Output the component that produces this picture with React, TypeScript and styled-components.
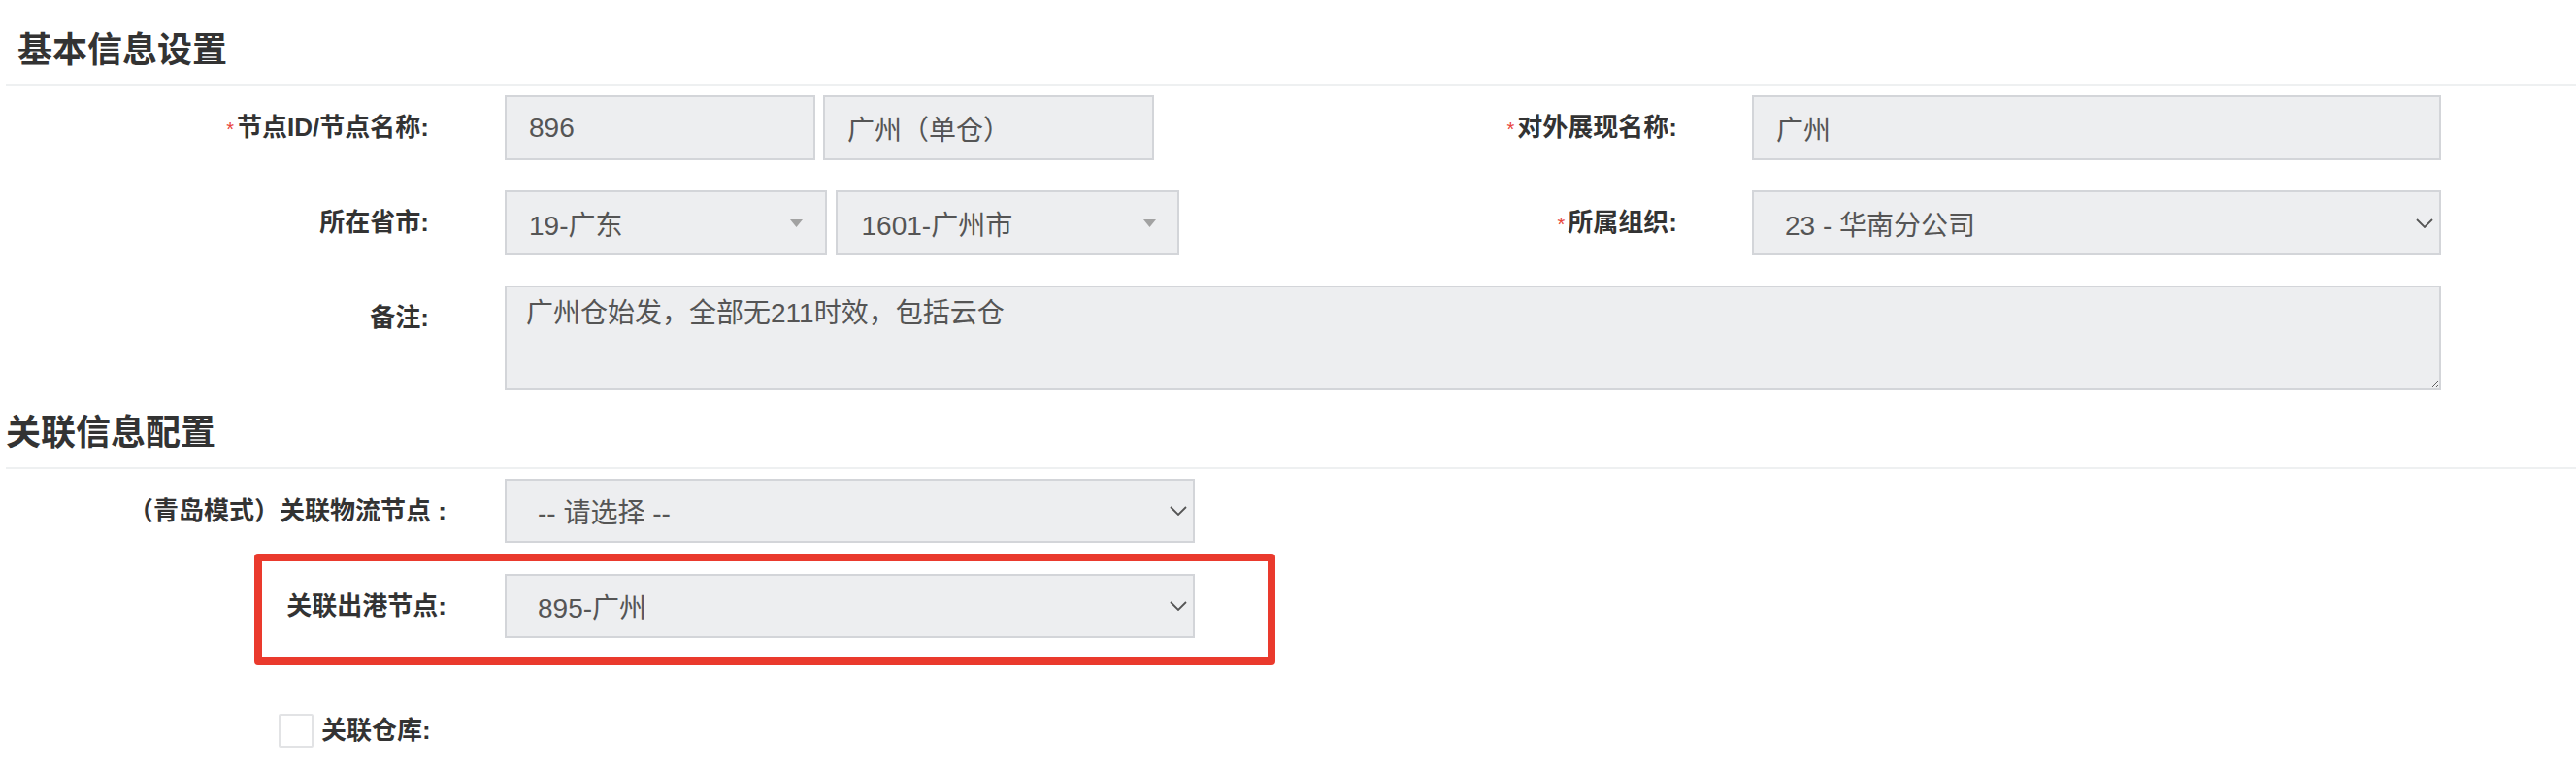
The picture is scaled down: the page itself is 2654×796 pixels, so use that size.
import React from "react";
import styled, { createGlobalStyle } from "styled-components";

const GlobalStyle = createGlobalStyle`
  html, body {
    margin: 0;
    padding: 0;
    background: #ffffff;
  }
  body {
    font-family: "Liberation Sans", "Noto Sans CJK SC", sans-serif;
    color: #333333;
  }
  * { box-sizing: border-box; }
`;

const Page = styled.div`
  width: 2654px;
  padding-bottom: 20px;
`;

const SectionHeader = styled.h2<{ $indent: number; $top: number }>`
  margin: 0 0 0 6px;
  padding: ${(p) => p.$top}px 0 14px ${(p) => p.$indent}px;
  border-bottom: 2px solid #eef0f1;
  font-family: "Noto Sans CJK SC", sans-serif;
  font-size: 36px;
  line-height: 50px;
  font-weight: 600;
  color: #333333;
`;

const BasicGrid = styled.div`
  margin-top: 9px;
  display: grid;
  grid-template-columns: 520px 695px 590px 710px;
  grid-template-rows: 67px 67px 108px;
  row-gap: 31px;
`;

const FieldLabel = styled.label<{ $pad: number }>`
  display: block;
  padding-right: ${(p) => p.$pad}px;
  text-align: right;
  font-size: 26px;
  line-height: 67px;
  font-weight: 700;
  color: #333333;
  white-space: nowrap;
`;

const Required = styled.span`
  color: #e8453c;
  font-size: 20px;
  font-weight: 400;
  margin-right: 3px;
`;

const FieldGroup = styled.div<{ $gap: number }>`
  display: flex;
  gap: ${(p) => p.$gap}px;
  align-items: stretch;
`;

const TextInput = styled.input<{ $w?: number }>`
  width: ${(p) => (p.$w ? `${p.$w}px` : "100%")};
  height: 67px;
  margin: 0;
  padding: 0 0 0 23px;
  border: 2px solid #d3d5d9;
  border-radius: 0;
  background: #edeef0;
  font-family: "Liberation Sans", "Noto Sans CJK SC", sans-serif;
  font-size: 28px;
  color: #555555;
  outline: none;
`;

const SelectBox = styled.div<{ $w?: number; $h: number; $pl: number; $pr: number }>`
  display: flex;
  align-items: center;
  width: ${(p) => (p.$w ? `${p.$w}px` : "100%")};
  height: ${(p) => p.$h}px;
  padding: 0 ${(p) => p.$pr}px 0 ${(p) => p.$pl}px;
  border: 2px solid #d3d5d9;
  background: #edeef0;
  font-size: 28px;
  color: #555555;
  white-space: nowrap;
`;

const SelectValue = styled.span`
  flex: 1;
`;

const NoteArea = styled.textarea`
  grid-column: 2 / 5;
  width: 100%;
  height: 108px;
  margin: 0;
  padding: 9px 20px 4px;
  border: 2px solid #d3d5d9;
  border-radius: 0;
  background: #edeef0;
  font-family: "Liberation Sans", "Noto Sans CJK SC", sans-serif;
  font-size: 28px;
  line-height: 36px;
  color: #555555;
  outline: none;
`;

const LinkRows = styled.div`
  margin-top: 10px;
  display: flex;
  flex-direction: column;
  align-items: flex-start;
`;

const LinkRow = styled.div<{ $labelW: number }>`
  display: grid;
  grid-template-columns: ${(p) => p.$labelW}px 711px;
  column-gap: 60px;
  align-items: center;
`;

const LinkLabel = styled.label`
  display: block;
  text-align: right;
  font-size: 26px;
  line-height: 66px;
  font-weight: 700;
  color: #333333;
  white-space: nowrap;
`;

const HighlightFrame = styled.div`
  margin: 11px 0 0 262px;
  width: 1052px;
  padding: 13px 75px 20px 0;
  border: 8px solid #ea3a2d;
  border-radius: 4px;
`;

const CheckRow = styled.div`
  margin-top: 50px;
  padding-left: 287px;
  display: flex;
  align-items: center;
  gap: 8px;
`;

const CheckBox = styled.span`
  display: block;
  width: 36px;
  height: 35px;
  border: 2px solid #e2e3e5;
  border-radius: 2px;
  background: #ffffff;
`;

const CheckLabel = styled.span`
  font-size: 26px;
  font-weight: 700;
  color: #333333;
  line-height: 35px;
`;

const Triangle = () => (
  <svg width="13" height="8" viewBox="0 0 13 8">
    <polygon points="0,0 13,0 6.5,8" fill="#a2a2a2" />
  </svg>
);

const Chevron = () => (
  <svg width="18" height="10" viewBox="0 0 18 10">
    <polyline
      points="1,1 9,9 17,1"
      fill="none"
      stroke="#555555"
      strokeWidth="1.8"
    />
  </svg>
);

export default function App() {
  return (
    <Page>
      <GlobalStyle />
      <SectionHeader $indent={12} $top={23}>
        基本信息设置
      </SectionHeader>
      <BasicGrid>
        <FieldLabel $pad={78}>
          <Required>*</Required>节点ID/节点名称:
        </FieldLabel>
        <FieldGroup $gap={8}>
          <TextInput $w={320} readOnly value="896" />
          <TextInput $w={341} readOnly value="广州（单仓）" />
        </FieldGroup>
        <FieldLabel $pad={77}>
          <Required>*</Required>对外展现名称:
        </FieldLabel>
        <TextInput readOnly value="广州" />

        <FieldLabel $pad={78}>所在省市:</FieldLabel>
        <FieldGroup $gap={9}>
          <SelectBox $w={332} $h={67} $pl={23} $pr={23}>
            <SelectValue>19-广东</SelectValue>
            <Triangle />
          </SelectBox>
          <SelectBox $w={355} $h={67} $pl={25} $pr={22}>
            <SelectValue>1601-广州市</SelectValue>
            <Triangle />
          </SelectBox>
        </FieldGroup>
        <FieldLabel $pad={77}>
          <Required>*</Required>所属组织:
        </FieldLabel>
        <SelectBox $h={67} $pl={32} $pr={6}>
          <SelectValue>23 - 华南分公司</SelectValue>
          <Chevron />
        </SelectBox>

        <FieldLabel $pad={78}>备注:</FieldLabel>
        <NoteArea readOnly value="广州仓始发，全部无211时效，包括云仓" />
      </BasicGrid>

      <SectionHeader $indent={0} $top={15}>
        关联信息配置
      </SectionHeader>
      <LinkRows>
        <LinkRow $labelW={460}>
          <LinkLabel>（青岛模式）关联物流节点 :</LinkLabel>
          <SelectBox $h={66} $pl={32} $pr={6}>
            <SelectValue>-- 请选择 --</SelectValue>
            <Chevron />
          </SelectBox>
        </LinkRow>
        <HighlightFrame>
          <LinkRow $labelW={190}>
            <LinkLabel>关联出港节点:</LinkLabel>
            <SelectBox $h={66} $pl={32} $pr={6}>
              <SelectValue>895-广州</SelectValue>
              <Chevron />
            </SelectBox>
          </LinkRow>
        </HighlightFrame>
      </LinkRows>
      <CheckRow>
        <CheckBox />
        <CheckLabel>关联仓库:</CheckLabel>
      </CheckRow>
    </Page>
  );
}
